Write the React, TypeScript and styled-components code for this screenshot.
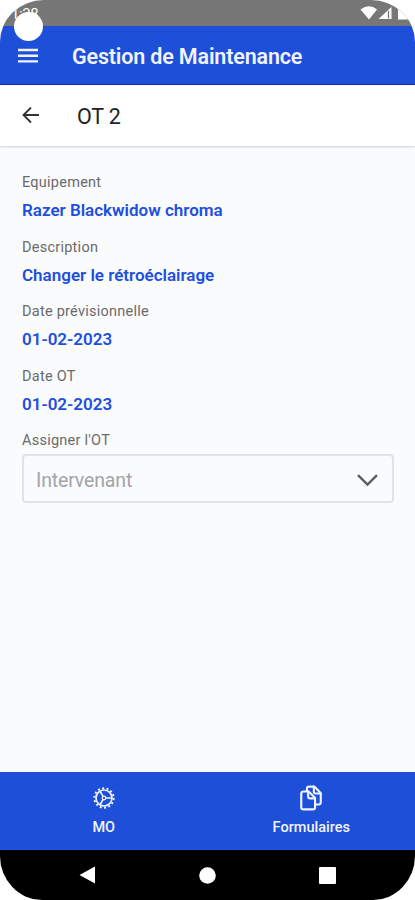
import React from "react";
import styled, { createGlobalStyle } from "styled-components";
import { IoDocumentsOutline } from "react-icons/io5";

const GlobalStyle = createGlobalStyle`
  * { box-sizing: border-box; }
  body { margin: 0; background: #fff; font-family: Roboto, sans-serif; }
`;

const Screen = styled.div`
  position: relative;
  display: flex;
  flex-direction: column;
  width: 415px;
  height: 900px;
  overflow: hidden;
  background: #fafbfd;
  border-radius: 44px 44px 42px 42px / 42px 42px 44px 44px;
`;

const StatusBar = styled.div`
  display: flex;
  justify-content: space-between;
  height: 26px;
  flex: none;
  background: #777;
`;

const Clock = styled.span`
  padding: 5px 0 0 11px;
  color: #fff;
  font-size: 15px;
  line-height: 18px;
  letter-spacing: -0.4px;
`;

const StatusIcons = styled.svg`
  width: 60px;
  height: 26px;
`;

const CameraHole = styled.div`
  position: absolute;
  left: 14px;
  top: 12px;
  width: 29px;
  height: 29px;
  border-radius: 50%;
  background: #fff;
`;

const AppBar = styled.header`
  display: flex;
  align-items: center;
  gap: 34px;
  height: 59px;
  flex: none;
  padding: 2px 0 0 18px;
  background: #1d4fd8;
  border-bottom: 1px solid #0c2fc0;
`;

const AppTitle = styled.h1`
  margin: 2px 0 0;
  color: #f1f4ff;
  font-size: 21.5px;
  font-weight: 600;
  line-height: 28px;
  letter-spacing: -0.16px;
  white-space: nowrap;
`;

const PageBar = styled.div`
  display: flex;
  align-items: center;
  gap: 37px;
  height: 61px;
  flex: none;
  padding-left: 22px;
  background: #fff;
  box-shadow: 0 1px 2px rgba(0, 0, 0, 0.18);
`;

const PageTitle = styled.h2`
  margin: 2px 0 0;
  color: #222;
  font-size: 21.5px;
  font-weight: 400;
  line-height: 28px;
  letter-spacing: -0.2px;
`;

const Icon = styled.svg`
  display: block;
  flex: none;
  fill: none;
`;

const Content = styled.main`
  flex: 1;
  padding: 27px 21px 0 22px;
`;

const Field = styled.div`
  height: 64.6px;
`;

const Label = styled.div`
  color: #6a6a6a;
  font-size: 14.5px;
  font-weight: 450;
  line-height: 20px;
  letter-spacing: 0.25px;
`;

const Value = styled.div`
  padding-top: 7px;
  color: #1d4fe0;
  font-size: 17px;
  font-weight: 600;
  line-height: 21px;
  letter-spacing: 0;
`;

const Select = styled.div`
  display: flex;
  align-items: center;
  justify-content: space-between;
  height: 49px;
  margin-top: 3px;
  padding: 3px 14px 0 12px;
  border: 2px solid #e1e3e5;
  border-radius: 4px;
  color: #a2a4a6;
  font-size: 19.5px;
  letter-spacing: -0.15px;
`;

const TabBar = styled.nav`
  display: grid;
  grid-template-columns: 1fr 1fr;
  height: 78px;
  flex: none;
  background: #1d4fd8;
`;

const Tab = styled.div`
  display: flex;
  flex-direction: column;
  align-items: center;
  padding-top: 13px;
  color: #f1f4ff;
  font-size: 14.5px;
  font-weight: 500;
  line-height: 18px;
`;

const TabIcon = styled.span`
  display: flex;
  align-items: center;
  justify-content: center;
  height: 26px;
  margin-bottom: 8px;
`;

const DocumentsIcon = styled(IoDocumentsOutline)`
  path { stroke-width: 42px; }
`;

const SystemNav = styled.div`
  height: 50px;
  flex: none;
  display: flex;
  align-items: center;
  justify-content: space-between;
  padding: 0 79px;
  background: #000;
`;

const fields = [
  { label: "Equipement", value: "Razer Blackwidow chroma" },
  { label: "Description", value: "Changer le rétroéclairage" },
  { label: "Date prévisionnelle", value: "01-02-2023" },
  { label: "Date OT", value: "01-02-2023" },
];

export default function App() {
  return (
    <>
      <GlobalStyle />
      <Screen>
        <StatusBar>
          <Clock>1:38</Clock>
          <StatusIcons viewBox="355 0 60 26" fill="#fff">
            <path d="M360.5 9.5Q369 3 377 9.5L369 19.5Z" />
            <path d="M391.5 7V19H378.5Z" />
            <path d="M388.5 11V18.5" stroke="#777" strokeWidth="1.3" />
            <path d="M398 8H400V7H404V8H406V13H409V19.5H398Z" />
          </StatusIcons>
        </StatusBar>
        <AppBar>
          <Icon width="20" height="16" viewBox="0 0 20 16" stroke="#f1f4ff" strokeWidth="2.4">
            <path d="M0 2H20M0 7.7H20M0 13.4H20" />
          </Icon>
          <AppTitle>Gestion de Maintenance</AppTitle>
        </AppBar>
        <PageBar>
          <Icon width="18" height="18" viewBox="0 0 18 18" stroke="#333" strokeWidth="1.8">
            <path d="M9 0.5L1.5 8L9 15.5M1.5 8H17" />
          </Icon>
          <PageTitle>OT 2</PageTitle>
        </PageBar>
        <Content>
          {fields.map((f) => (
            <Field key={f.label}>
              <Label>{f.label}</Label>
              <Value>{f.value}</Value>
            </Field>
          ))}
          <Label>Assigner l'OT</Label>
          <Select>
            Intervenant
            <Icon width="21" height="13" viewBox="0 0 21 13" stroke="#5c5c5c" strokeWidth="2.4">
              <path d="M1 1.2L10.5 10.5L20 1.2" />
            </Icon>
          </Select>
        </Content>
        <TabBar>
          <Tab>
            <TabIcon>
              <Icon width="24" height="24" viewBox="0 0 24 24" stroke="#f1f4ff" strokeWidth="1.7">
                <circle cx="12" cy="12" r="8" />
                <circle cx="12" cy="12" r="9.7" strokeDasharray="2 2.354" strokeWidth="1.9" />
                <path d="M13.8 12H20M11 10.4L8 5.2M11 13.6L8 18.8" />
                <circle cx="12" cy="12" r="1.8" strokeWidth="1.3" />
              </Icon>
            </TabIcon>
            MO
          </Tab>
          <Tab>
            <TabIcon><DocumentsIcon size={26} /></TabIcon>
            Formulaires
          </Tab>
        </TabBar>
        <SystemNav>
          <Icon width="17" height="18" viewBox="0 0 17 18">
            <path d="M16 0.5V17.5L0.5 9Z" fill="#fff" />
          </Icon>
          <Icon width="17" height="17" viewBox="0 0 17 17">
            <circle cx="8.5" cy="8.5" r="8.3" fill="#fff" />
          </Icon>
          <Icon width="17" height="17" viewBox="0 0 17 17">
            <rect width="17" height="17" rx="1" fill="#fff" />
          </Icon>
        </SystemNav>
        <CameraHole />
      </Screen>
    </>
  );
}
